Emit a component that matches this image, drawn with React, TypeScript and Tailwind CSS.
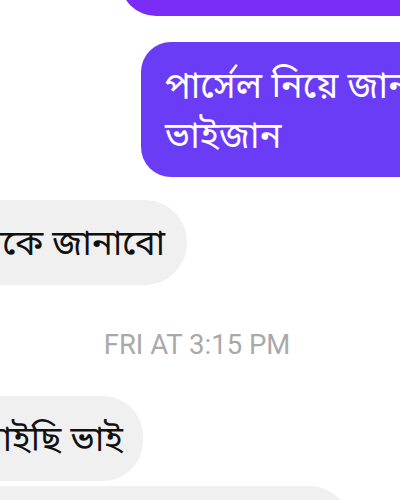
const bn = { fontFamily: '"Noto Sans Bengali", "Noto Sans", "Liberation Sans", sans-serif' };

function Outgoing({ lines, className }: { lines: string[]; className: string }) {
  return (
    <div className={`self-start rounded-l-[30px] whitespace-nowrap text-white ${className}`} style={bn}>
      {lines.map((l) => (
        <div key={l}>{l}</div>
      ))}
    </div>
  );
}

function Incoming({ text, className }: { text: string; className: string }) {
  return (
    <div
      className={`flex justify-end items-center bg-[#f0f0f0] text-[#111111] whitespace-nowrap ${className}`}
      style={bn}
    >
      {text}
    </div>
  );
}

export default function App() {
  return (
    <div className="w-[400px] h-[500px] overflow-hidden bg-white">
      <div className="flex flex-col">
        <div className="ml-[120px] mt-[-44px] h-[60px] w-[320px] rounded-bl-[36px] bg-[#7a2df6]" />

        <Outgoing
          lines={['পার্সেল নিয়ে জানাবেন', 'ভাইজান']}
          className="ml-[141px] mt-[26px] w-[340px] h-[135px] bg-[#6b3cf6] pl-[24px] pt-[22px] text-[36px] leading-[50px]"
        />

        <Incoming
          text="ঠিক আছে আপনাকে জানাবো"
          className="ml-[-250px] mt-[23px] w-[437px] h-[85px] rounded-r-[42px] pr-[22px] text-[35px] pt-[8px]"
        />

        <div
          className="mt-[45px] text-center text-[27.5px] leading-[30px] text-[#a9a9a9] pr-[6px]"
          style={{ fontFamily: 'Roboto, "Liberation Sans", sans-serif' }}
        >
          FRI AT 3:15 PM
        </div>

        <Incoming
          text="ঠিক আছে পাইছি ভাই"
          className="ml-[-250px] mt-[36px] w-[393px] h-[85px] rounded-r-[40px] pr-[20px] text-[35px] pt-[8px]"
        />

        <div className="ml-[-200px] mt-[5px] w-[550px] h-[60px] rounded-tr-[40px] bg-[#f0f0f0]" />
      </div>
    </div>
  );
}
